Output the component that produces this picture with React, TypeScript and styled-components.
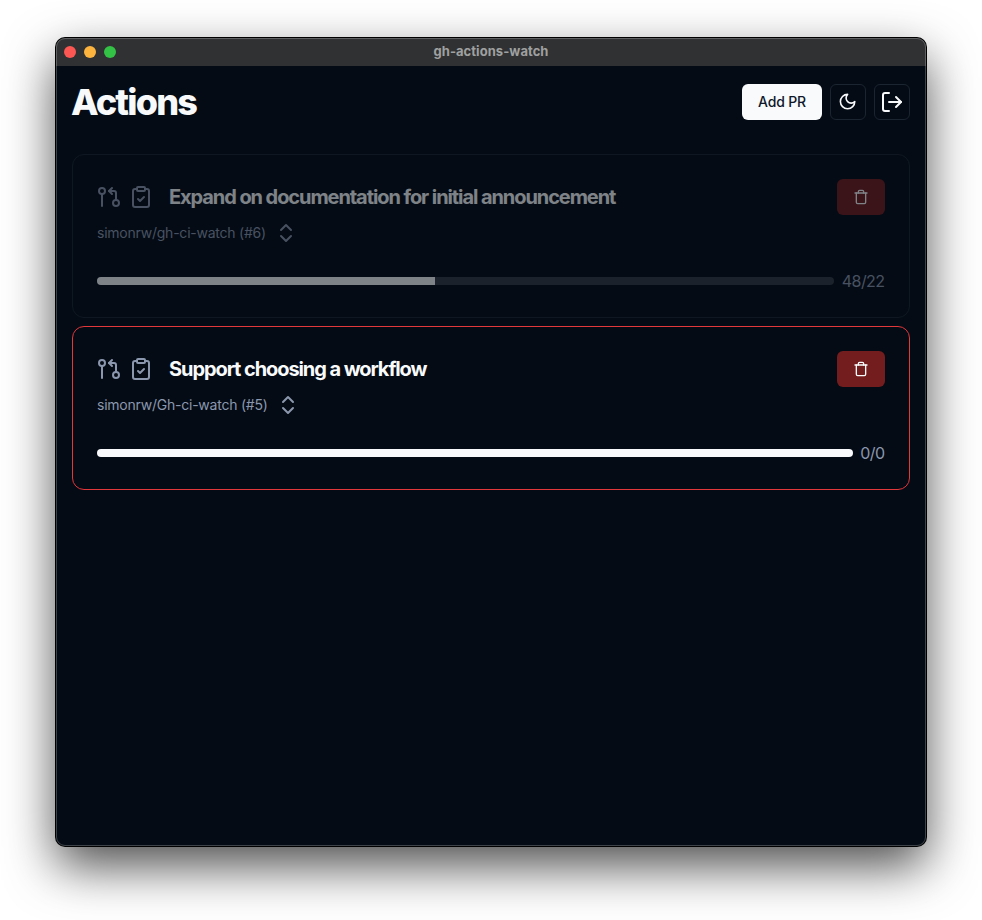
import React from "react";
import styled, { createGlobalStyle } from "styled-components";

const Global = createGlobalStyle`
  *, *::before, *::after { box-sizing: border-box; }
  html, body { margin: 0; padding: 0; background: #fff; }
  body { overflow: hidden; }
  h1, h2, p { margin: 0; }
  button { font: inherit; cursor: pointer; }
`;

const Desktop = styled.div`
  width: 982px;
  height: 920px;
  padding: 38px 56px 74px;
  background: #fff;
  font-family: Inter, "Liberation Sans", sans-serif;
  overflow: hidden;
`;

const Window = styled.div`
  position: relative;
  display: flex;
  flex-direction: column;
  width: 870px;
  height: 808px;
  border-radius: 9px;
  background: #040b14;
  box-shadow: 0 0 0 1px #000, 0 20px 50px rgba(0, 0, 0, 0.7);

  &::after {
    content: "";
    position: absolute;
    inset: 0;
    border: 1px solid rgba(255, 255, 255, 0.23);
    border-radius: 9px;
    pointer-events: none;
  }
`;

const TitleBar = styled.header`
  display: grid;
  grid-template-columns: 1fr auto 1fr;
  align-items: center;
  flex: none;
  height: 28px;
  padding: 0 8px;
  border-radius: 9px 9px 0 0;
  background: #303132;
  color: #9fa0a0;
  font-size: 13px;
  font-weight: 700;
`;

const WindowTitle = styled.span`
  padding-bottom: 2px;
  line-height: 16px;
  letter-spacing: 0.05px;
`;

const Lights = styled.div`
  display: flex;
  gap: 8px;
`;

const Light = styled.span<{ $color: string }>`
  width: 12px;
  height: 12px;
  border-radius: 50%;
  background: ${(p) => p.$color};
`;

const Content = styled.main`
  display: flex;
  flex-direction: column;
  padding: 16px;
`;

const Header = styled.div`
  display: flex;
  align-items: center;
  justify-content: space-between;
  height: 40px;
  margin-bottom: 32px;
`;

const Heading = styled.h1`
  margin-left: -1px;
  color: #f7f9fb;
  font-size: 36px;
  line-height: 40px;
  font-weight: 800;
  letter-spacing: -1.8px;
`;

const Toolbar = styled.div`
  display: flex;
  gap: 8px;
`;

const PrimaryButton = styled.button`
  width: 80px;
  height: 36px;
  padding: 0 0 2px;
  border: 0;
  border-radius: 6px;
  background: #f8fafc;
  color: #0f172a;
  font-size: 14px;
  font-weight: 500;
  letter-spacing: -0.15px;
  white-space: nowrap;
`;

const IconButton = styled.button`
  display: flex;
  align-items: center;
  justify-content: center;
  width: 36px;
  height: 36px;
  padding: 0;
  border: 1px solid #1b2431;
  border-radius: 6px;
  background: transparent;
  color: #f8fafc;
`;

const CardList = styled.div`
  display: flex;
  flex-direction: column;
  gap: 8px;
`;

const Card = styled.article<{ $failed: boolean; $dimmed: boolean }>`
  height: 164px;
  padding: 24px;
  border: 1px solid ${(p) => (p.$failed ? "#e2373b" : "#1b2431")};
  border-radius: 12px;
  opacity: ${(p) => (p.$dimmed ? 0.5 : 1)};
`;

const CardTop = styled.div`
  display: flex;
  align-items: center;
  height: 36px;
  color: #8b97ae;
`;

const StatusIcons = styled.div`
  display: flex;
  gap: 8px;
  margin-right: 16px;
`;

const CardTitle = styled.h2`
  flex: 1;
  color: #f8fafc;
  font-size: 20px;
  line-height: 28px;
  font-weight: 650;
  letter-spacing: -1.08px;
  white-space: nowrap;
`;

const DeleteButton = styled.button`
  display: flex;
  align-items: center;
  justify-content: center;
  width: 48px;
  height: 36px;
  padding: 0;
  border: 0;
  border-radius: 6px;
  background: #731d1e;
  color: #f8fafc;
`;

const RepoRow = styled.div`
  display: flex;
  align-items: center;
  gap: 8px;
  height: 36px;
  color: #8b97ae;
  font-size: 14px;
  line-height: 20px;
  letter-spacing: -0.23px;
`;

const ProgressRow = styled.div`
  display: flex;
  align-items: center;
  gap: 8px;
  height: 24px;
  margin-top: 18px;
  color: #8b97ae;
  font-size: 16px;
  line-height: 24px;
  letter-spacing: -0.56px;
`;

const Count = styled.span`
  position: relative;
  left: -0.5px;
`;

const Track = styled.div`
  flex: 1;
  height: 8px;
  border-radius: 4px;
  background: #343a42;
  overflow: hidden;
`;

const Fill = styled.div`
  height: 100%;
  background: #f8fafc;
`;

const Icon = ({ size = 24, children }: { size?: number; children: React.ReactNode }) => (
  <svg
    width={size}
    height={size}
    viewBox="0 0 24 24"
    fill="none"
    stroke="currentColor"
    strokeWidth="2"
    strokeLinecap="round"
    strokeLinejoin="round"
  >
    {children}
  </svg>
);

const PullRequestIcon = () => (
  <Icon>
    <circle cx="5" cy="6" r="3" />
    <path d="M5 9v12" />
    <circle cx="19" cy="18" r="3" />
    <path d="m15 9-3-3 3-3" />
    <path d="M12 6h5a2 2 0 0 1 2 2v7" />
  </Icon>
);

const ClipboardIcon = () => (
  <Icon>
    <rect width="8" height="4" x="8" y="2" rx="1" ry="1" />
    <path d="M16 4h2a2 2 0 0 1 2 2v14a2 2 0 0 1-2 2H6a2 2 0 0 1-2-2V6a2 2 0 0 1 2-2h2" />
    <path d="m9 14 2 2 4-4" />
  </Icon>
);

const ExpandIcon = () => (
  <Icon>
    <path d="m7 15 5 5 5-5" />
    <path d="m7 9 5-5 5 5" />
  </Icon>
);

const TrashIcon = () => (
  <Icon size={16}>
    <path d="M3 6h18" />
    <path d="M19 6v14c0 1-1 2-2 2H7c-1 0-2-1-2-2V6" />
    <path d="M8 6V4c0-1 1-2 2-2h4c1 0 2 1 2 2v2" />
  </Icon>
);

const MoonIcon = () => (
  <Icon size={19.2}>
    <path d="M12 3a6 6 0 0 0 9 9 9 9 0 1 1-9-9Z" />
  </Icon>
);

const ExitIcon = () => (
  <Icon>
    <path d="M9 21H5a2 2 0 0 1-2-2V5a2 2 0 0 1 2-2h4" />
    <path d="m16 17 5-5-5-5" />
    <path d="M21 12H9" />
  </Icon>
);

interface PullRequest {
  title: string;
  repo: string;
  count: string;
  percent: number;
  failed: boolean;
  dimmed: boolean;
}

const pullRequests: PullRequest[] = [
  {
    title: "Expand on documentation for initial announcement",
    repo: "simonrw/gh-ci-watch (#6)",
    count: "48/22",
    percent: 45.83,
    failed: false,
    dimmed: true,
  },
  {
    title: "Support choosing a workflow",
    repo: "simonrw/Gh-ci-watch (#5)",
    count: "0/0",
    percent: 100,
    failed: true,
    dimmed: false,
  },
];

const PullRequestCard = ({ pr }: { pr: PullRequest }) => (
  <Card $failed={pr.failed} $dimmed={pr.dimmed}>
    <CardTop>
      <StatusIcons>
        <PullRequestIcon />
        <ClipboardIcon />
      </StatusIcons>
      <CardTitle>{pr.title}</CardTitle>
      <DeleteButton aria-label="Remove">
        <TrashIcon />
      </DeleteButton>
    </CardTop>
    <RepoRow>
      <span>{pr.repo}</span>
      <ExpandIcon />
    </RepoRow>
    <ProgressRow>
      <Track>
        <Fill style={{ width: `${pr.percent}%` }} />
      </Track>
      <Count>{pr.count}</Count>
    </ProgressRow>
  </Card>
);

export default function App() {
  return (
    <>
      <Global />
      <Desktop>
        <Window>
          <TitleBar>
            <Lights>
              <Light $color="#fc5753" />
              <Light $color="#fdb43f" />
              <Light $color="#33c245" />
            </Lights>
            <WindowTitle>gh-actions-watch</WindowTitle>
          </TitleBar>
          <Content>
            <Header>
              <Heading>Actions</Heading>
              <Toolbar>
                <PrimaryButton>Add PR</PrimaryButton>
                <IconButton aria-label="Toggle theme">
                  <MoonIcon />
                </IconButton>
                <IconButton aria-label="Log out">
                  <ExitIcon />
                </IconButton>
              </Toolbar>
            </Header>
            <CardList>
              {pullRequests.map((pr) => (
                <PullRequestCard key={pr.repo} pr={pr} />
              ))}
            </CardList>
          </Content>
        </Window>
      </Desktop>
    </>
  );
}
